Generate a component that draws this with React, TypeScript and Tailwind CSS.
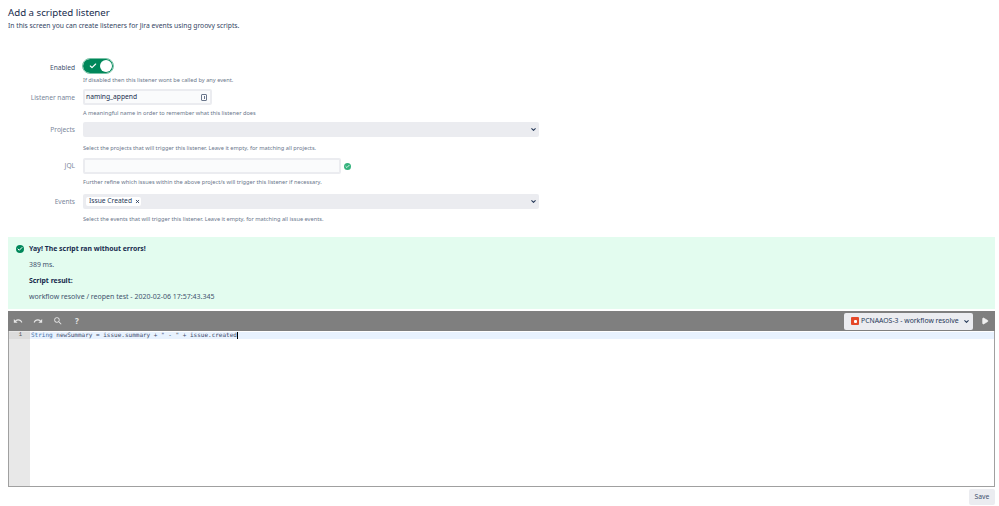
import { Check, ChevronDown, X, Play } from "lucide-react";
import { MdUndo, MdRedo, MdSearch } from "react-icons/md";

const font = { fontFamily: '"Noto Sans", sans-serif' };

function Row({ label, labelCls = "text-[#7a869a] leading-[16px]", children, help, helpTop = "mt-[3px]" }: { label: string; labelCls?: string; children: React.ReactNode; help: string; helpTop?: string }) {
  return (
    <div className="flex">
      <div className={`w-[75px] shrink-0 text-right text-[6.6px] ${labelCls}`}>{label}</div>
      <div className="ml-[8px] flex-1">
        {children}
        <div className={`text-[5.66px] leading-[9px] text-[#6b778c] ${helpTop}`}>{help}</div>
      </div>
    </div>
  );
}

function Select({ children }: { children?: React.ReactNode }) {
  return (
    <div className="flex h-[15px] w-[456px] items-center justify-between rounded-[2px] bg-[#ebecf0] pl-[3px] pr-[2px]">
      <div className="flex items-center">{children}</div>
      <ChevronDown size={7} strokeWidth={3.5} className="text-[#253858]" />
    </div>
  );
}

export default function App() {
  return (
    <div className="relative h-[506px] w-[999px] overflow-hidden bg-white" style={font}>
      <div className="px-[8px] pt-[5px]">
        <h1 className="text-[9.7px] leading-[16px] font-normal text-[#172b4d]">Add a scripted listener</h1>
        <p className="text-[6.75px] leading-[9px] text-[#344563]">In this screen you can create listeners for Jira events using groovy scripts.</p>
      </div>

      <div className="mt-[29px] flex flex-col">
        <Row label="Enabled" labelCls="text-[#42526e] leading-[17px]" help="If disabled then this listener wont be called by any event." helpTop="mt-[3px]">
          <div className="flex h-[14px] w-[30px] items-center justify-between rounded-full bg-[#00875a] pl-[6px] pr-[1px] outline outline-1 outline-[#79c2a6]">
            <Check size={8} strokeWidth={3.5} className="text-white" />
            <div className="h-[12px] w-[12px] rounded-full bg-white" />
          </div>
        </Row>
        <div className="mt-[4px]">
          <Row label="Listener name" labelCls="text-[#7a869a] leading-[18px]" help="A meaningful name in order to remember what this listener does" helpTop="mt-[4px]">
            <div className="flex h-[16px] w-[129px] items-center justify-between rounded-[2px] border-2 border-[#ebecf0] bg-[#fafbfc] px-[1px] text-[6.7px] text-[#172b4d]">
              <span>naming_append</span>
              <span className="mr-[2px] flex h-[7px] w-[6px] items-center justify-center rounded-[1px] border border-[#6b778c]">
                <span className="h-[3px] w-[1px] bg-[#6b778c]" />
              </span>
            </div>
          </Row>
        </div>
        <div className="mt-[4px]">
          <Row label="Projects" labelCls="text-[#7a869a] leading-[15px]" help="Select the projects that will trigger this listener. Leave it empty, for matching all projects." helpTop="mt-[7px]">
            <Select />
          </Row>
        </div>
        <div className="mt-[5px]">
          <Row label="JQL" help="Further refine which issues within the above project/s will trigger this listener if necessary." helpTop="mt-[4px]">
            <div className="flex items-center">
              <div className="h-[16px] w-[258px] rounded-[2px] border-2 border-[#ebecf0] bg-[#fafbfc]" />
              <span className="ml-[3px] flex h-[7px] w-[7px] items-center justify-center rounded-full bg-[#36b37e]">
                <Check size={5} strokeWidth={4} className="text-white" />
              </span>
            </div>
          </Row>
        </div>
        <div className="mt-[7px]">
          <Row label="Events" labelCls="text-[#7a869a] leading-[15px]" help="Select the events that will trigger this listener. Leave it empty, for matching all issue events." helpTop="mt-[6px]">
            <Select>
              <span className="flex h-[9px] items-center rounded-[2px] bg-white pl-[3px] pr-[1px] text-[6.7px] text-[#253858]">
                Issue Created
                <X size={5} strokeWidth={4} className="ml-[3px] text-[#253858]" />
              </span>
            </Select>
          </Row>
        </div>
      </div>

      <div className="mx-[8px] mt-[13px] h-[72px] w-[987px] bg-[#e3fcef] pl-[21px] pt-[7px] text-[#172b4d]">
        <div className="relative text-[6.9px] leading-[10px] font-bold">
          <span className="absolute left-[-13px] top-[1px] flex h-[8px] w-[8px] items-center justify-center rounded-full bg-[#00875a]">
            <Check size={6} strokeWidth={4} className="text-white" />
          </span>
          Yay! The script ran without errors!
        </div>
        <div className="mt-[6px] text-[6.9px] leading-[10px] text-[#42526e]">389 ms.</div>
        <div className="mt-[6px] text-[6.9px] leading-[10px] font-bold">Script result:</div>
        <div className="mt-[6px] text-[7px] leading-[10px] text-[#42526e]">workflow resolve / reopen test - 2020-02-06 17:57:43.345</div>
      </div>

      <div className="mx-[8px] mt-[2px] flex h-[176px] w-[987px] flex-col border border-[#a0a0a0] border-t-0">
        <div className="-mx-px flex h-[20px] shrink-0 items-center bg-[#7f7f7f] pl-[5px] pr-[6px]">
          <MdUndo size={10} className="text-[#e6e6e6]" />
          <MdRedo size={10} className="ml-[10px] text-[#e6e6e6]" />
          <MdSearch size={10} className="ml-[10px] text-[#e6e6e6]" />
          <span className="ml-[12px] text-[8px] font-bold leading-[10px] text-[#e6e6e6]">?</span>
          <div className="ml-auto flex h-[17px] w-[129px] items-center rounded-[2px] bg-[#ebecf0] pl-[7px] pr-[3px] text-[6.85px] text-[#253858]">
            <span className="flex h-[8px] w-[8px] shrink-0 items-center justify-center rounded-[1px] bg-[#e5492a]">
              <span className="h-[3px] w-[3px] rounded-[1px] bg-white" />
            </span>
            <span className="ml-[2px] whitespace-nowrap">PCNAAOS-3 - workflow resolve</span>
            <ChevronDown size={7} strokeWidth={3.5} className="ml-auto shrink-0" />
          </div>
          <Play size={8} fill="#f0f0f0" className="ml-[8px] text-[#f0f0f0]" />
        </div>
        <div className="flex min-h-0 flex-1">
          <div className="w-[21px] shrink-0 bg-[#e8e8e8] pt-px">
            <div className="h-[7px] bg-[#dcdcdc] pr-[8px] text-right text-[5.5px] leading-[6px] text-[#555]" style={{ fontFamily: '"Liberation Mono", monospace' }}>1</div>
          </div>
          <div className="flex-1 pt-px">
            <div className="flex h-[7px] items-start bg-[#e8f2fe] pl-px text-[6px] leading-[6px] whitespace-pre text-[#3d4b6b]" style={{ fontFamily: '"DejaVu Sans Mono", monospace' }}>
              <span className="text-[#3f6fa8]">String</span> newSummary = issue.summary + " - " + issue.created
              <span className="h-[7px] w-px bg-black" />
            </div>
          </div>
        </div>
      </div>

      <div className="mt-[2px] flex justify-end pr-[4px]">
        <div className="flex h-[16px] w-[26px] items-center justify-center rounded-[2px] bg-[#ebecf0] text-[6.8px] text-[#42526e]">Save</div>
      </div>
    </div>
  );
}
